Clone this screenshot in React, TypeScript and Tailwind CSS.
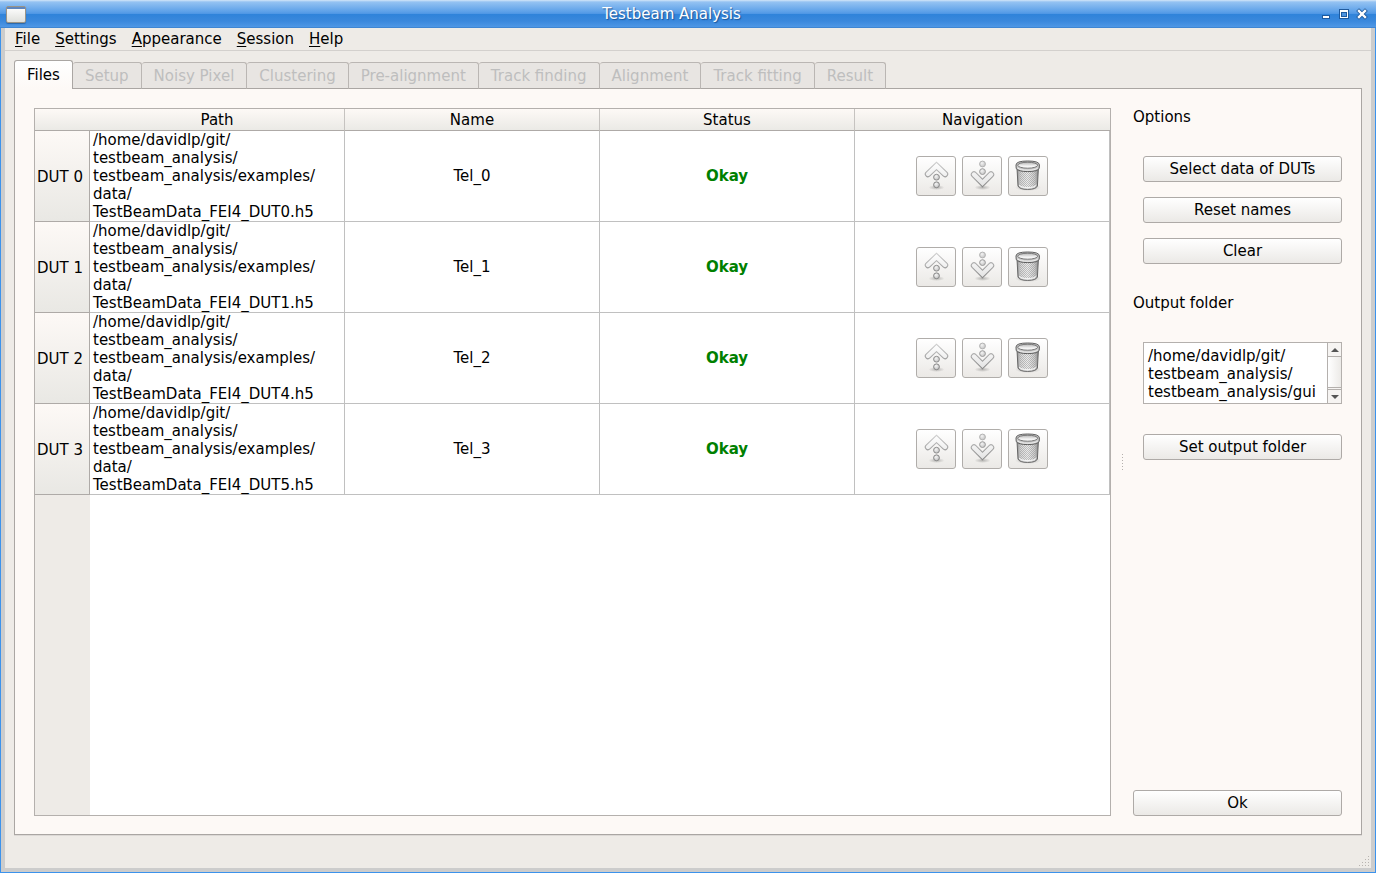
import React, { useState } from "react";

const menus = ["File", "Settings", "Appearance", "Session", "Help"];

const tabs = [
  "Setup",
  "Noisy Pixel",
  "Clustering",
  "Pre-alignment",
  "Track finding",
  "Alignment",
  "Track fitting",
  "Result",
];

const duts = [
  { id: "DUT 0", file: "TestBeamData_FEI4_DUT0.h5", name: "Tel_0" },
  { id: "DUT 1", file: "TestBeamData_FEI4_DUT1.h5", name: "Tel_1" },
  { id: "DUT 2", file: "TestBeamData_FEI4_DUT4.h5", name: "Tel_2" },
  { id: "DUT 3", file: "TestBeamData_FEI4_DUT5.h5", name: "Tel_3" },
];

const pathLines = ["/home/davidlp/git/", "testbeam_analysis/", "testbeam_analysis/examples/", "data/"];

function IconDefs() {
  return (
    <svg className="absolute h-0 w-0" aria-hidden="true">
      <defs>
        <linearGradient id="arrowFill" gradientUnits="userSpaceOnUse" x1="0" y1="5" x2="0" y2="31">
          <stop offset="0" stopColor="#ffffff" />
          <stop offset="1" stopColor="#e2e2e2" />
        </linearGradient>
        <linearGradient id="upStroke" gradientUnits="userSpaceOnUse" x1="0" y1="5" x2="0" y2="21">
          <stop offset="0" stopColor="#d0d0d0" />
          <stop offset="1" stopColor="#9a9a9a" />
        </linearGradient>
        <linearGradient id="downStroke" gradientUnits="userSpaceOnUse" x1="0" y1="14" x2="0" y2="31">
          <stop offset="0" stopColor="#b0b0b0" />
          <stop offset="1" stopColor="#868686" />
        </linearGradient>
        <radialGradient id="ball" cx="0.4" cy="0.35" r="0.7">
          <stop offset="0" stopColor="#f4f4f4" />
          <stop offset="1" stopColor="#c0c0c0" />
        </radialGradient>
        <radialGradient id="shade">
          <stop offset="0" stopColor="#000" stopOpacity="0.25" />
          <stop offset="1" stopColor="#000" stopOpacity="0" />
        </radialGradient>
        <linearGradient id="can" x1="0" y1="0" x2="1" y2="0">
          <stop offset="0" stopColor="#8c8c8c" />
          <stop offset="0.18" stopColor="#d8d8d8" />
          <stop offset="0.5" stopColor="#ececec" />
          <stop offset="0.82" stopColor="#cccccc" />
          <stop offset="1" stopColor="#808080" />
        </linearGradient>
        <linearGradient id="canInside" x1="0" y1="0" x2="0" y2="1">
          <stop offset="0" stopColor="#b4b4b4" />
          <stop offset="0.6" stopColor="#f0f0f0" />
          <stop offset="1" stopColor="#ffffff" />
        </linearGradient>
        <pattern id="mesh" width="2" height="2" patternUnits="userSpaceOnUse">
          <rect width="1" height="1" fill="#777" fillOpacity="0.4" />
          <rect x="1" y="1" width="1" height="1" fill="#777" fillOpacity="0.4" />
        </pattern>
      </defs>
    </svg>
  );
}

function UpIcon() {
  return (
    <svg viewBox="0 0 38 38" className="size-[38px]" fill="none" aria-hidden="true">
      <ellipse cx="19.5" cy="30.5" rx="8" ry="2.5" fill="url(#shade)" />
      <g strokeLinecap="round">
        <path d="M11 17L19.5 9L28 17" stroke="url(#upStroke)" strokeWidth="6.4" />
        <path d="M11 17L19.5 9L28 17" stroke="url(#arrowFill)" strokeWidth="4.4" />
      </g>
      <circle cx="19.5" cy="20.2" r="2.9" fill="url(#ball)" stroke="#8e8e8e" />
      <circle cx="19.5" cy="27.8" r="2.9" fill="url(#ball)" stroke="#868686" />
    </svg>
  );
}

function DownIcon() {
  return (
    <svg viewBox="0 0 38 38" className="size-[38px]" fill="none" aria-hidden="true">
      <ellipse cx="19.5" cy="30.5" rx="8" ry="2.5" fill="url(#shade)" />
      <g strokeLinecap="round">
        <path d="M11 17.5L19.5 26L28 17.5" stroke="url(#downStroke)" strokeWidth="6.4" />
        <path d="M11 17.5L19.5 26L28 17.5" stroke="url(#arrowFill)" strokeWidth="4.4" />
      </g>
      <circle cx="19.5" cy="7" r="2.9" fill="url(#ball)" stroke="#b4b4b4" />
      <circle cx="19.5" cy="14.6" r="2.9" fill="url(#ball)" stroke="#9c9c9c" />
    </svg>
  );
}

function TrashIcon() {
  return (
    <svg viewBox="0 0 38 38" className="size-[38px]" fill="none" aria-hidden="true">
      <ellipse cx="19" cy="30.5" rx="13" ry="3.5" fill="url(#shade)" />
      <path
        d="M8 11L9 29Q10.5 32.4 18.7 32.4Q27 32.4 28.4 29L29.4 11Z"
        fill="url(#can)"
        stroke="#666"
      />
      <path d="M10.5 13L11.2 28Q13 30 18.7 30Q24.4 30 26.2 28L27 13Z" fill="url(#mesh)" />
      <path d="M10 28Q12 30.6 18.7 30.6Q25.4 30.6 27.4 28" stroke="#f4f4f4" />
      <path
        d="M7 8Q7 4 18.7 4Q30.4 4 30.4 8L30.2 11.5Q28 14.6 18.7 14.6Q9.4 14.6 7.2 11.5Z"
        fill="#c9c9c9"
        stroke="#5e5e5e"
      />
      <ellipse cx="18.7" cy="8.2" rx="10" ry="3" fill="url(#canInside)" stroke="#6c6c6c" strokeWidth="0.9" />
      <path d="M8.6 11Q11.5 13.2 18.7 13.2Q26 13.2 28.8 11" stroke="#eeeeee" />
    </svg>
  );
}

function IconButton({ label, disabled, children }: { label: string; disabled?: boolean; children: React.ReactNode }) {
  return (
    <button
      type="button"
      aria-label={label}
      disabled={disabled}
      className="flex size-10 items-center justify-center rounded-[3px] border border-[#b0adaa] bg-linear-to-b from-white to-[#ebe9e6]"
    >
      {children}
    </button>
  );
}

function PushButton({ children }: { children: React.ReactNode }) {
  return (
    <button
      type="button"
      className="h-[26px] w-full rounded-[3px] border border-[#aeaaa7] bg-linear-to-b from-white to-[#ebe9e6] leading-[18px] pb-px"
    >
      {children}
    </button>
  );
}

function TitleBar() {
  return (
    <header className="flex h-7 items-center bg-[linear-gradient(to_bottom,#d3e6f8_0px,#94c2f2_2px,#5b9fe8_12px,#4c95e4_14px,#2f83da_14px,#3a88dc_21px,#4e97e5_27px,#2f74c0_28px)] pr-[5px] pl-[6px]">
      <span className="flex h-[17px] w-5 flex-col rounded-[2px] border border-[#9a9488] bg-linear-to-b from-white to-[#dfe0dc] shadow-[0_1px_1px_#2a66a8]">
        <span className="h-[2px] bg-[#5f86bd]" />
      </span>
      <h1 className="flex-1 text-center leading-[18px] text-white [text-shadow:1px_1px_1px_#1c5596]">
        Testbeam Analysis
      </h1>
      <div className="flex">
        <button type="button" aria-label="Minimize" className="flex h-7 w-[18px] items-center justify-center">
          <svg viewBox="0 0 12 12" className="size-3" aria-hidden="true">
            <path d="M2 7h8v4H2z" fill="#1f5a9e" />
            <path d="M3 8h6v2H3z" fill="#fff" />
          </svg>
        </button>
        <button type="button" aria-label="Maximize" className="flex h-7 w-[18px] items-center justify-center">
          <svg viewBox="0 0 12 12" className="size-3" aria-hidden="true">
            <path d="M1 1h10v10H1z" fill="#1f5a9e" />
            <path d="M2 2h8v8H2z" fill="#fff" />
            <path d="M3 4h6v5H3z" fill="#1f5a9e" />
            <path d="M4 5h4v3H4z" fill="#4c94e0" />
          </svg>
        </button>
        <button type="button" aria-label="Close" className="flex h-7 w-[18px] items-center justify-center">
          <svg viewBox="0 0 12 12" className="size-3" aria-hidden="true">
            <path d="M3 3l6 6m0-6l-6 6" stroke="#1f5a9e" strokeWidth="4" strokeLinecap="square" />
            <path d="M3 3l6 6m0-6l-6 6" stroke="#fff" strokeWidth="2.4" strokeLinecap="square" />
          </svg>
        </button>
      </div>
    </header>
  );
}

function FileTable() {
  const head = "h-[22px] border-b border-[#aeaaa7] p-0 font-normal leading-[18px]";
  return (
    <section className="flex min-w-0 flex-1 flex-col border border-[#b4b0ad] bg-white">
      <table className="w-full table-fixed border-separate border-spacing-0">
        <colgroup>
          <col className="w-[55px]" />
          <col />
          <col />
          <col />
          <col />
        </colgroup>
        <thead>
          <tr className="bg-linear-to-b from-[#fdf9f6] to-[#eae9e5]">
            <td className={head} />
            <th scope="col" className={`${head} border-r border-r-[#c6c3c0]`}>Path</th>
            <th scope="col" className={`${head} border-r border-r-[#c6c3c0]`}>Name</th>
            <th scope="col" className={`${head} border-r border-r-[#c6c3c0]`}>Status</th>
            <th scope="col" className={head}>Navigation</th>
          </tr>
        </thead>
        <tbody>
          {duts.map((dut, row) => (
            <tr key={dut.id}>
              <th
                scope="row"
                className="h-[91px] border-r border-b border-[#aeaaa7] bg-linear-to-b from-[#fdf9f6] to-[#e9e8e4] p-0 pt-[2px] pl-[2px] text-left font-normal whitespace-nowrap"
              >
                {dut.id}
              </th>
              <td className="border-r border-b border-[#c0c0c0] p-0 pl-[3px]">
                {[...pathLines, dut.file].map((line) => (
                  <span key={line} className="block whitespace-nowrap">
                    {line}
                  </span>
                ))}
              </td>
              <td className="border-r border-b border-[#c0c0c0] p-0 text-center">{dut.name}</td>
              <td className="border-r border-b border-[#c0c0c0] p-0 text-center font-bold text-[#008000]">Okay</td>
              <td className="border-r border-b border-[#c0c0c0] p-0">
                <div className="flex justify-center gap-[6px]">
                  <IconButton label={`Move ${dut.id} up`} disabled={row === 0}>
                    <UpIcon />
                  </IconButton>
                  <IconButton label={`Move ${dut.id} down`} disabled={row === duts.length - 1}>
                    <DownIcon />
                  </IconButton>
                  <IconButton label={`Delete ${dut.id}`}>
                    <TrashIcon />
                  </IconButton>
                </div>
              </td>
            </tr>
          ))}
        </tbody>
      </table>
      <div className="flex flex-1">
        <div className="w-[55px] bg-[#eeebe7]" />
      </div>
    </section>
  );
}

function ScrollBar() {
  return (
    <div className="flex w-[14px] flex-col border-l border-[#b4b0ad] bg-[#f6f4f2]" aria-hidden="true">
      <div className="flex h-[14px] items-center justify-center border-b border-[#b4b0ad]">
        <svg viewBox="0 0 8 4" className="h-1 w-2">
          <path d="M0 4L4 0L8 4z" fill="#555" />
        </svg>
      </div>
      <div className="flex-1 bg-linear-to-r from-white to-[#eceae7]" />
      <div className="h-[3px] border-t border-b border-[#b4b0ad]" />
      <div className="flex h-[13px] items-center justify-center">
        <svg viewBox="0 0 8 4" className="h-1 w-2">
          <path d="M0 0L4 4L8 0z" fill="#555" />
        </svg>
      </div>
    </div>
  );
}

function OptionsPanel() {
  const [folder, setFolder] = useState("/home/davidlp/git/\ntestbeam_analysis/\ntestbeam_analysis/gui");
  return (
    <aside className="flex w-[209px] flex-col">
      <h2>Options</h2>
      <div className="mt-[30px] flex flex-col gap-[15px] pl-[10px]">
        <PushButton>Select data of DUTs</PushButton>
        <PushButton>Reset names</PushButton>
        <PushButton>Clear</PushButton>
      </div>
      <label htmlFor="output-folder" className="mt-[30px]">
        Output folder
      </label>
      <div className="mt-[30px] pl-[10px]">
        <div className="flex border border-[#b4b0ad] bg-white">
          <textarea
            id="output-folder"
            rows={3}
            value={folder}
            onChange={(e) => setFolder(e.target.value)}
            className="block min-w-0 flex-1 resize-none overflow-hidden bg-white pt-1 pb-[2px] pl-1 leading-[18px] whitespace-pre outline-none"
          />
          <ScrollBar />
        </div>
      </div>
      <div className="mt-[30px] pl-[10px]">
        <PushButton>Set output folder</PushButton>
      </div>
      <div className="mt-auto">
        <PushButton>Ok</PushButton>
      </div>
    </aside>
  );
}

export default function App() {
  return (
    <div className="flex min-h-screen flex-col bg-[#3b92ec] font-['DejaVu_Sans',sans-serif] text-[15px] leading-[18px] text-black">
      <IconDefs />
      <TitleBar />
      <div className="mx-px mb-px flex flex-1 flex-col border-x-4 border-b-4 border-[#cccccc] bg-[#eeebe7]">
        <nav className="flex h-[23px] items-center gap-[15px] border-b border-[#d3d0cd] pl-[10px]">
          {menus.map((menu) => (
            <button key={menu} type="button" className="leading-[18px]">
              <span className="underline decoration-1 underline-offset-2">{menu[0]}</span>
              {menu.slice(1)}
            </button>
          ))}
        </nav>
        <main className="flex flex-1 flex-col px-[9px] pt-[9px] pb-[33px]">
          <div role="tablist" className="z-10 -mb-px flex items-end">
            <button
              type="button"
              role="tab"
              aria-selected="true"
              className="h-[29px] rounded-t-[3px] border border-b-0 border-[#aaa6a3] bg-linear-to-b from-white to-[#fdf9f6] px-3"
            >
              Files
            </button>
            {tabs.map((tab) => (
              <button
                key={tab}
                type="button"
                role="tab"
                aria-selected="false"
                disabled
                className="h-[27px] rounded-t-[3px] border border-l-0 border-[#bab6b3] border-b-[#aaa6a3] bg-[#e8e5e2] px-3 whitespace-nowrap text-[#bebebe]"
              >
                {tab}
              </button>
            ))}
          </div>
          <div
            role="tabpanel"
            className="flex flex-1 border border-[#aaa6a3] bg-[#fdf9f6] px-[19px] pt-[19px] pb-[18px] shadow-[0_1px_0_#dcd9d6]"
          >
            <FileTable />
            <div className="flex w-[22px] items-center justify-center" aria-hidden="true">
              <span className="h-[17px] w-px bg-[repeating-linear-gradient(to_bottom,#b4b0ad_0px,#b4b0ad_1px,transparent_1px,transparent_3px)]" />
            </div>
            <OptionsPanel />
          </div>
        </main>
        <footer className="flex justify-end">
          <svg viewBox="0 0 12 12" className="-mt-3 size-3" aria-hidden="true">
            <path
              d="M9 0h1v1h-1zM6 3h1v1h-1zM9 3h1v1h-1zM3 6h1v1h-1zM6 6h1v1h-1zM9 6h1v1h-1zM0 9h1v1h-1zM3 9h1v1h-1zM6 9h1v1h-1zM9 9h1v1h-1z"
              fill="#b8b4b0"
            />
          </svg>
        </footer>
      </div>
    </div>
  );
}
